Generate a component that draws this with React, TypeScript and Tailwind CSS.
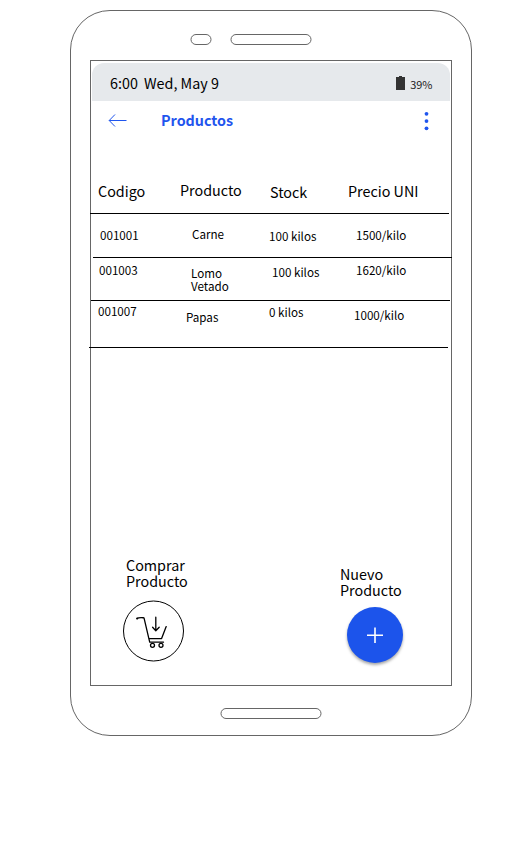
type Cell = { text: string; box: string };
type RowData = { height: string; rule: string; size: string; cells: Cell[] };

const rows: RowData[] = [
  {
    height: "h-[45px]",
    rule: "-ml-px",
    size: "text-[14.33px] leading-[16px]",
    cells: [
      { text: "Codigo", box: "ml-[7px] w-[82px] mt-[15px]" },
      { text: "Producto", box: "w-[90px] mt-[14px]" },
      { text: "Stock", box: "w-[78px] mt-[16px]" },
      { text: "Precio UNI", box: "w-[90px] mt-[15px]" },
    ],
  },
  {
    height: "h-[43px]",
    rule: "ml-[2px]",
    size: "text-[11.64px] leading-[13px]",
    cells: [
      { text: "001001", box: "ml-[9px] w-[92px] mt-[14px]" },
      { text: "Carne", box: "w-[77px] mt-[13px]" },
      { text: "100 kilos", box: "w-[87px] mt-[15px]" },
      { text: "1500/kilo", box: "w-[80px] mt-[14px]" },
    ],
  },
  {
    height: "h-[42px]",
    rule: "",
    size: "text-[11.64px] leading-[13px]",
    cells: [
      { text: "001003", box: "ml-[8px] w-[92px] mt-[5px]" },
      { text: "Lomo Vetado", box: "w-[45px] mr-[36px] mt-[8px]" },
      { text: "100 kilos", box: "w-[84px] mt-[7px]" },
      { text: "1620/kilo", box: "w-[80px] mt-[5px]" },
    ],
  },
  {
    height: "h-[46px]",
    rule: "-ml-[2px]",
    size: "text-[11.64px] leading-[13px]",
    cells: [
      { text: "001007", box: "ml-[7px] w-[88px] mt-[3px]" },
      { text: "Papas", box: "w-[83px] mt-[9px]" },
      { text: "0 kilos", box: "w-[85px] mt-[4px]" },
      { text: "1000/kilo", box: "w-[80px] mt-[7px]" },
    ],
  },
];

function Pill({ width }: { width: number }) {
  return (
    <svg className="h-[11px]" width={width + 2} viewBox={`0 0 ${width + 2} 11`} fill="none" stroke="#666">
      <rect x="1" y="0.5" width={width} height="10" rx="5" />
    </svg>
  );
}

function StatusBar() {
  return (
    <div className="ml-px mt-[2px] flex h-[38px] w-[358px] items-start rounded-t-[12px] bg-[#e6e9ec]">
      <span className="ml-[18px] mt-[12px] w-[34px] text-[14.33px] leading-[16px]">6:00</span>
      <span className="mt-[12px] text-[14.33px] leading-[16px]">Wed, May 9</span>
      <svg className="ml-auto mt-[13px] h-[14px] w-[9px]" viewBox="0 0 9 14" fill="#333">
        <path d="M3 0h3v1h3v13H0V1h3z" />
      </svg>
      <span className="ml-[5.5px] mr-[17.5px] mt-[15px] text-[11px] leading-[12px] text-[#222]">39%</span>
    </div>
  );
}

function AppBar() {
  return (
    <div className="flex h-[67px] items-start text-[#1f55ee]">
      <svg className="ml-[17px] mt-[12px] h-[15px] w-[19px]" viewBox="0 0 19 15" fill="none" stroke="currentColor" strokeWidth="1">
        <path d="M18.5 7.5H1.2M7 1.5L1.2 7.5L7 13.5" />
      </svg>
      <h1 className="ml-[34px] mt-[11px] text-[14.33px] font-bold leading-[16px]">Productos</h1>
      <svg className="ml-auto mr-[22px] mt-[10px] h-[20px] w-[5px]" viewBox="0 0 5 20" fill="currentColor">
        <circle cx="2.5" cy="2.8" r="1.9" />
        <circle cx="2.5" cy="10.1" r="1.9" />
        <circle cx="2.5" cy="17.3" r="1.9" />
      </svg>
    </div>
  );
}

function ProductTable() {
  return (
    <div>
      {rows.map((row) => (
        <div key={row.cells[0].text}>
          <div className={`flex items-start ${row.height} ${row.size}`}>
            {row.cells.map((cell, i) => (
              <div key={i} className={`shrink-0 ${cell.box}`}>
                {cell.text}
              </div>
            ))}
          </div>
          <div className={`h-px w-[359px] bg-black ${row.rule}`} />
        </div>
      ))}
    </div>
  );
}

function Actions() {
  return (
    <div className="mt-[209px] flex items-start text-[14.33px] leading-[16px]">
      <div className="ml-[32px] w-[70px]">
        <div className="ml-[3px]">Comprar Producto</div>
        <svg className="mt-[11px] h-[62px] w-[62px]" viewBox="0 0 62 62" fill="none" stroke="black">
          <circle cx="30.5" cy="31" r="30" strokeWidth="1" />
          <g strokeWidth="1.3" strokeLinecap="round" strokeLinejoin="round">
            <path d="M14 18.6C15.5 17.3 18 17.6 21 17.8L26.7 42.2H40.5M25.8 38.6H38.6L43.2 26.6" />
            <path d="M32.8 17.2V30.5M29.6 27.3L32.8 30.8L36.2 27.3" />
            <circle cx="29.5" cy="45.3" r="2" />
            <circle cx="38" cy="45.3" r="2" />
          </g>
          <circle cx="14.2" cy="18.5" r="1" fill="black" stroke="none" />
        </svg>
      </div>
      <div className="ml-[147px] mt-[9px] w-[70px]">
        <div>Nuevo Producto</div>
        <button className="ml-[7px] mt-[9px] flex h-[56px] w-[56px] items-center justify-center rounded-full bg-[#1c54eb] shadow-[0_2px_3px_rgba(0,0,0,0.35)]">
          <svg className="h-[16px] w-[16px]" viewBox="0 0 16 16" stroke="white" strokeWidth="1.6">
            <path d="M8 .5V16M0 8.3H16" />
          </svg>
        </button>
      </div>
    </div>
  );
}

export default function App() {
  return (
    <main className="h-[846px] w-[522px] overflow-hidden bg-white pl-[70px] pt-[10px] font-['Noto_Sans_CJK_SC',sans-serif] text-black">
      <div className="h-[726px] w-[402px] rounded-[40px] border border-[#666] pl-[19px]">
        <div className="flex gap-[18px] pl-[100px] pt-[23px]">
          <Pill width={20} />
          <Pill width={80} />
        </div>
        <div className="mt-[15px] h-[626px] w-[362px] border border-[#666]">
          <StatusBar />
          <AppBar />
          <ProductTable />
          <Actions />
        </div>
        <div className="ml-[130px] mt-[22px] flex">
          <Pill width={100} />
        </div>
      </div>
    </main>
  );
}
